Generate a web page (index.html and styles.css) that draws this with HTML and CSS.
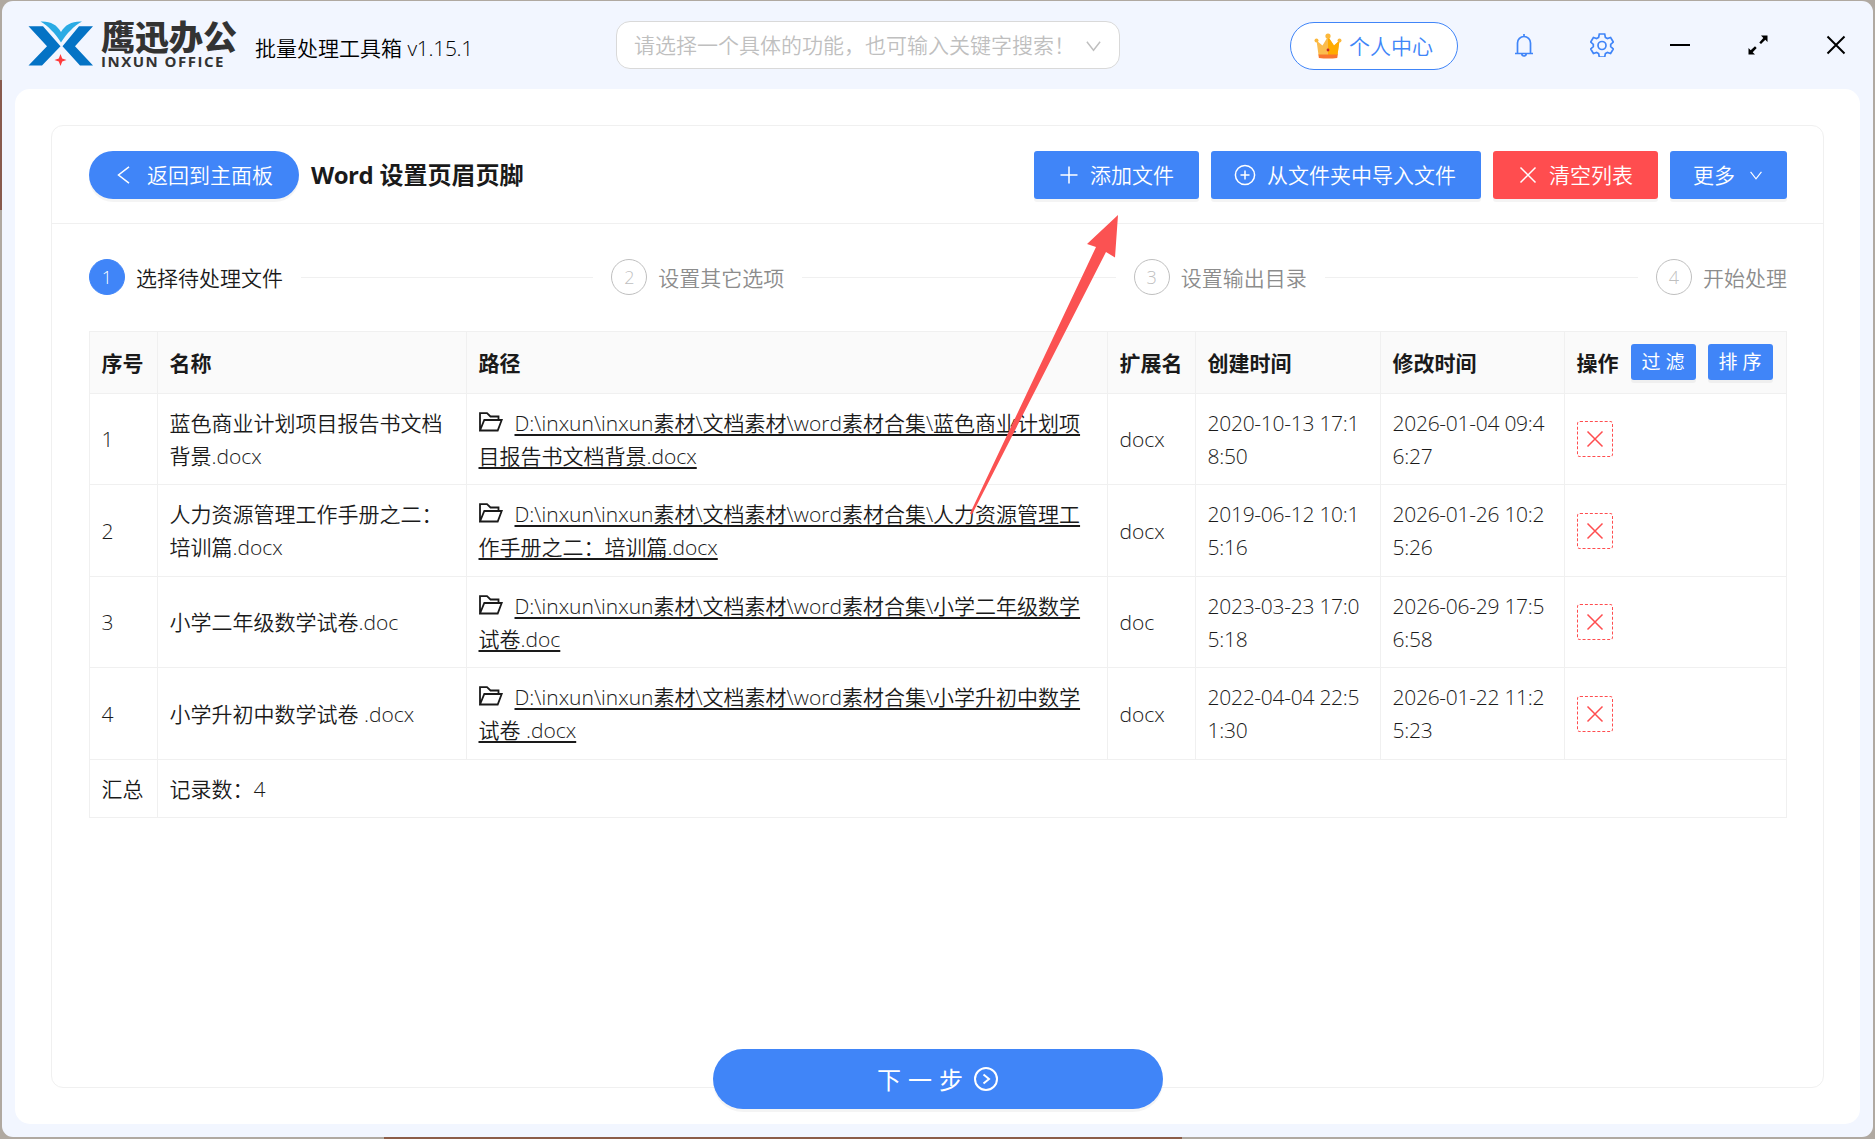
FILE: index.html
```
<!DOCTYPE html>
<html lang="zh-CN">
  <head>
    <meta charset="UTF-8" />
    <meta name="viewport" content="width=device-width, initial-scale=1.0" />
    <title>批量处理工具箱</title>
    <link rel="stylesheet" href="styles.css">
  </head>
  <body>
    <!-- shared icons -->
    <svg class="sprite" width="0" height="0">
      <symbol id="close" viewBox="0 0 18 18"><path d="M1.5 1.5l15 15M16.5 1.5l-15 15" /></symbol>
      <symbol id="down" viewBox="0 0 18 18"><path d="M2 5l7 9 7-9" /></symbol>
      <symbol id="folder" viewBox="0 0 24 20"><path d="M1 18.5V1.2h7l3.5 3.3h8v3.3M1 18.5L5.3 8h17.4l-4 10.500z" /></symbol>
    </svg>

    <div class="window">
      <header>
        <svg class="logo" viewBox="0 0 66 46" width="66" height="46">
          <path fill="#0473c5" d="M0.500 5.300h14.500l17.500 20L14 44.600H0.500L19 25.300zM65 5.300H51L34.500 25.300 52 44.600h13L47 25.300z" />
          <path fill="#2aabe4" d="M12.500.5c10-.5 16 3 20.500 10.500C37.500 3.500 44 0 54 .5 46 5 39 12 33 21.500 27 12 20 5 12.500.5z" />
          <path fill="#ff3b3b" d="M32.500 33l1.700 4.500 4.300 1.500-4.300 1.500-1.700 4.500-1.700-4.500-4.300-1.500 4.300-1.500z" />
        </svg>
        <div class="brand">
          <div class="brand-cn">鹰迅办公</div>
          <div class="brand-en">INXUN OFFICE</div>
        </div>
        <div class="app-name">批量处理工具箱 <span>v1.15.1</span></div>
        <div class="search">
          <span>请选择一个具体的功能，也可输入关键字搜索！</span>
          <svg class="line" width="17" height="17"><use href="#down" /></svg>
        </div>
        <div class="user">
          <svg viewBox="0 0 28 26" width="28" height="26">
            <path fill="#fbbc4d" d="M2.500 7.500l6 5L14 3.500l6 9 5.500-5L23.500 22h-19z" />
            <path fill="#ffab00" d="M14 3.500l6 9 5.500-5L23.500 22H14z" />
            <path fill="#f9762f" d="M4.300 21.500h19.500l-.6 3.500q-9 1-18.300 0z" />
            <g fill="#fbb83c"><circle cx="2.500" cy="7.500" r="2" /><circle cx="25.500" cy="7.500" r="2" /><circle cx="14" cy="3" r="2.600" /></g>
            <circle fill="#c62828" cx="14" cy="17" r="1.400" />
          </svg>
          个人中心
        </div>
        <div class="tools">
          <svg class="line blue" viewBox="0 0 24 24" width="24" height="24">
            <path d="M3 20.500h18M5.500 20.500V10a6.500 6.500 0 0 1 13 0v10.500M12 3.500V1M9.800 20.800a2.200 2.200 0 0 0 4.400 0" />
          </svg>
          <svg class="line blue" viewBox="0 0 24 24" width="24" height="24">
            <path d="M9.300 1h5.400l.7 3.400 2 1.200 3.200-1.100 2.700 4.600-2.600 2.200v2.400l2.600 2.200-2.700 4.600-3.200-1.100-2 1.200-.7 3.400H9.300l-.7-3.400-2-1.200-3.200 1.100L.7 15.900l2.600-2.200v-2.400L.7 9.100l2.700-4.600 3.200 1.100 2-1.200z" />
            <circle cx="12" cy="12.500" r="4" />
          </svg>
          <svg class="line dark" viewBox="0 0 24 24" width="24" height="24"><path d="M2 12h20" /></svg>
          <svg viewBox="0 0 24 24" width="24" height="24">
            <path d="M15 2.500h6.500V9l-2.200-2.200-4.300 4.300-1.700-1.700 4-4.300zM9 21.500H2.500V15l2.200 2.200 4.300-4 1.700 1.700-4 4.300z" />
          </svg>
          <svg class="line dark" viewBox="0 0 24 24" width="24" height="24"><path d="M3.500 3.500l17 17M20.500 3.500l-17 17" /></svg>
        </div>
      </header>

      <main>
        <section class="card">
          <div class="card-head">
            <div class="btn back">
              <svg class="line" viewBox="0 0 18 18" width="18" height="18"><path d="M15 .8L4.500 9 15 17.200" /></svg>
              返回到主面板
            </div>
            <h1><span>Word</span> 设置页眉页脚</h1>
            <div class="actions">
              <div class="btn"><svg class="line" viewBox="0 0 18 18" width="18" height="18"><path d="M9 .5v17M.5 9h17" /></svg>添加文件</div>
              <div class="btn import">
                <svg class="line" viewBox="0 0 22 22" width="22" height="22"><circle cx="11" cy="11" r="9.600" /><path d="M11 6.500v9M6.500 11h9" /></svg>从文件夹中导入文件
              </div>
              <div class="btn red"><svg class="line" width="18" height="18"><use href="#close" /></svg>清空列表</div>
              <div class="btn more">更多<svg class="line" width="14" height="14"><use href="#down" /></svg></div>
            </div>
          </div>

          <div class="steps">
            <div class="step active"><i>1</i><span>选择待处理文件</span></div>
            <div class="step"><i>2</i><span>设置其它选项</span></div>
            <div class="step"><i>3</i><span>设置输出目录</span></div>
            <div class="step"><i>4</i><span>开始处理</span></div>
          </div>

          <table>
            <colgroup>
              <col class="c-no"><col class="c-name"><col class="c-path"><col class="c-ext"><col class="c-date"><col class="c-date2"><col>
            </colgroup>
            <thead>
              <tr>
                <th>序号</th>
                <th>名称</th>
                <th>路径</th>
                <th>扩展名</th>
                <th>创建时间</th>
                <th>修改时间</th>
                <th><div class="ops">操作<b class="btn small">过滤</b><b class="btn small">排序</b></div></th>
              </tr>
            </thead>
            <tbody>
              <tr>
                <td>1</td>
                <td>蓝色商业计划项目报告书文档<br>背景.docx</td>
                <td><svg class="line folder" width="24" height="20"><use href="#folder" /></svg><u>D:\inxun\inxun素材\文档素材\word素材合集\蓝色商业计划项<br>目报告书文档背景.docx</u></td>
                <td>docx</td>
                <td class="date">2020-10-13 17:1<br>8:50</td>
                <td class="date">2026-01-04 09:4<br>6:27</td>
                <td class="op"><div class="del"><svg class="line" width="18" height="18"><use href="#close" /></svg></div></td>
              </tr>
              <tr>
                <td>2</td>
                <td>人力资源管理工作手册之二：<br>培训篇.docx</td>
                <td><svg class="line folder" width="24" height="20"><use href="#folder" /></svg><u>D:\inxun\inxun素材\文档素材\word素材合集\人力资源管理工<br>作手册之二：培训篇.docx</u></td>
                <td>docx</td>
                <td class="date">2019-06-12 10:1<br>5:16</td>
                <td class="date">2026-01-26 10:2<br>5:26</td>
                <td class="op"><div class="del"><svg class="line" width="18" height="18"><use href="#close" /></svg></div></td>
              </tr>
              <tr>
                <td>3</td>
                <td>小学二年级数学试卷.doc</td>
                <td><svg class="line folder" width="24" height="20"><use href="#folder" /></svg><u>D:\inxun\inxun素材\文档素材\word素材合集\小学二年级数学<br>试卷.doc</u></td>
                <td>doc</td>
                <td class="date">2023-03-23 17:0<br>5:18</td>
                <td class="date">2026-06-29 17:5<br>6:58</td>
                <td class="op"><div class="del"><svg class="line" width="18" height="18"><use href="#close" /></svg></div></td>
              </tr>
              <tr>
                <td>4</td>
                <td>小学升初中数学试卷 .docx</td>
                <td><svg class="line folder" width="24" height="20"><use href="#folder" /></svg><u>D:\inxun\inxun素材\文档素材\word素材合集\小学升初中数学<br>试卷 .docx</u></td>
                <td>docx</td>
                <td class="date">2022-04-04 22:5<br>1:30</td>
                <td class="date">2026-01-22 11:2<br>5:23</td>
                <td class="op"><div class="del"><svg class="line" width="18" height="18"><use href="#close" /></svg></div></td>
              </tr>
            </tbody>
            <tfoot>
              <tr>
                <td>汇总</td>
                <td colspan="6">记录数：4</td>
              </tr>
            </tfoot>
          </table>
        </section>

        <div class="btn next">
          <span>下一步</span>
          <svg class="line" viewBox="0 0 24 24" width="24" height="24"><circle cx="12" cy="12" r="11" /><path d="M9.500 7.500l5.500 4.500-5.500 4.500" /></svg>
        </div>
      </main>
    </div>

    <!-- pointer to the add button -->
    <svg class="pointer" viewBox="0 0 150 302" width="150" height="302">
      <path d="M149 1L146 43.500 137 38 3 300.500 1 299.500 127 33 118 30z" />
    </svg>
  </body>
</html>
```

FILE: styles.css
```
* {
  margin: 0;
  padding: 0;
  box-sizing: border-box;
}

body {
  height: 1139px;
  padding: 1px 2px 2px;
  overflow: hidden;
  background:
    linear-gradient(#8c5d48, #8c5d48) 384px 1137px / 798px 2px no-repeat,
    linear-gradient(#885a4e, #885a4e) 0 80px / 2px 130px no-repeat,
    #b0a9a1;
  font-family: "Open Sans", "Noto Sans CJK SC", sans-serif;
  font-weight: 330;
  font-size: 21px;
  line-height: 33px;
  color: #1a1a1a;
}

.sprite {
  position: absolute;
}

.line {
  fill: none;
  stroke: currentColor;
  stroke-width: 1.5;
}

.window {
  height: 1136px;
  padding: 0 13px 13px;
  border-radius: 11px;
  background: #f2f6ff;
}

/* title bar */
header {
  display: flex;
  align-items: center;
  height: 88px;
  padding: 0 13px;
  color: #000;
  white-space: nowrap;
}

header > * {
  flex-shrink: 0;
}

.logo {
  margin-top: -3px;
}

.brand {
  width: 138px;
  margin: -1px 0 0 7px;
  color: #333;
  font-weight: 900;
}

.brand-cn {
  font-size: 34px;
  line-height: 34px;
}

.brand-en {
  font-family: "Open Sans", sans-serif;
  font-weight: 700;
  font-size: 15px;
  line-height: 15px;
  letter-spacing: 1.5px;
}

.app-name {
  width: 377px;
  padding: 6px 0 0 16px;
}

.app-name span {
  letter-spacing: -0.3px;
}

.search {
  display: flex;
  align-items: center;
  justify-content: space-between;
  width: 504px;
  height: 48px;
  padding: 0 17px;
  border: 1px solid #d9d9d9;
  border-radius: 14px;
  background: #fff;
  color: #bfbfbf;
}

.user {
  display: flex;
  align-items: center;
  gap: 7px;
  width: 168px;
  height: 48px;
  margin: 2px 0 0 170px;
  padding-left: 23px;
  border: 1px solid #4085f8;
  border-radius: 24px;
  background: #fff;
  color: #4085f8;
}

.tools {
  display: flex;
  gap: 54px;
  margin-left: 54px;
}

.blue {
  color: #4085f8;
  stroke-width: 1.7;
}

.dark {
  stroke-width: 2;
}

/* content */
main {
  height: 1035px;
  padding: 36px;
  border-radius: 15px;
  background: #fff;
}

.card {
  height: 963px;
  border: 1px solid #f0f0f0;
  border-radius: 12px;
}

.card-head {
  display: flex;
  align-items: center;
  height: 98px;
  padding: 0 36px 0 37px;
  border-bottom: 1px solid #f0f0f0;
}

h1 {
  margin-left: 12px;
  font-size: 24px;
  font-weight: 700;
}

h1 span {
  letter-spacing: -0.5px;
}

.btn {
  display: flex;
  align-items: center;
  height: 48px;
  border-radius: 3px;
  background: #4085f8;
  color: #fff;
  box-shadow: 0 3px 0 rgba(0, 0, 0, 0.045);
  white-space: nowrap;
}

.card-head .btn {
  padding-top: 2px;
}

.card-head .btn svg {
  margin-top: -2px;
}

.back {
  width: 210px;
  gap: 15px;
  padding-left: 25px;
  border-radius: 24px;
}

.actions {
  display: flex;
  gap: 12px;
  margin-left: auto;
}

.actions .btn {
  gap: 12px;
  width: 165px;
  padding-left: 26px;
}

.actions .import {
  width: 270px;
  padding-left: 23px;
  gap: 11px;
}

.actions .red {
  background: #ff4d4f;
}

.actions .more {
  width: 117px;
  padding-left: 23px;
  gap: 14px;
}

/* steps */
.steps {
  display: flex;
  gap: 18px;
  height: 36px;
  margin: 35px 36px 36px 37px;
}

.step {
  display: flex;
  flex: 1;
  align-items: center;
  color: #8c8c8c;
  white-space: nowrap;
}

.step span {
  padding-top: 2px;
}

.step::after {
  content: "";
  flex: 1;
  height: 1px;
  margin-left: 18px;
  background: #f0f0f0;
}

.step:last-child {
  flex: none;
}

.step:last-child::after {
  display: none;
}

.step i {
  width: 36px;
  height: 36px;
  margin-right: 11px;
  border: 1px solid #bfbfbf;
  border-radius: 50%;
  color: #bfbfbf;
  font-size: 18px;
  font-style: normal;
  line-height: 34px;
  text-align: center;
}

.step.active {
  color: #1a1a1a;
}

.active i {
  border-color: #4085f8;
  background: #4085f8;
  color: #fff;
}

/* file list */
table {
  width: 1698px;
  margin-left: 37px;
  table-layout: fixed;
  border-collapse: collapse;
}

.c-no { width: 68px; }
.c-name { width: 309px; }
.c-path { width: 641px; }
.c-ext { width: 88px; }
.c-date { width: 185px; }
.c-date2 { width: 184px; }

th,
td {
  padding: 1px 0 0 11.5px;
  border: 1px solid #f0f0f0;
  text-align: left;
  white-space: nowrap;
}

th {
  height: 62px;
  background: #fafafa;
  font-weight: 700;
}

tbody tr {
  height: 91px;
}

tbody tr:nth-child(even) {
  height: 92px;
}

tfoot tr {
  height: 58px;
}

.date {
  letter-spacing: -0.27px;
}

.op {
  padding-top: 0;
}

.ops {
  display: flex;
  align-items: center;
  gap: 12px;
}

.small {
  width: 65px;
  height: 36px;
  margin-top: -2px;
  padding-left: 11px;
  font-size: 19px;
  font-weight: 400;
  letter-spacing: 5px;
}

.folder {
  margin: 0 12px 0 0;
  vertical-align: -1px;
  stroke-width: 1.8;
}

u {
  text-decoration-thickness: 2px;
  text-underline-offset: 3px;
}

.del {
  display: flex;
  align-items: center;
  justify-content: center;
  width: 36px;
  height: 36px;
  border: 1px dashed #ff4d4f;
  border-radius: 3px;
  color: #ff4d4f;
}

.next {
  justify-content: center;
  gap: 4px;
  position: relative;
  width: 450px;
  height: 60px;
  margin: -39px auto 0;
  border-radius: 30px;
  font-size: 24px;
  font-weight: 400;
}

.next span {
  letter-spacing: 7px;
}

.next svg {
  stroke-width: 2;
}

/* lies over the page */
.pointer {
  position: absolute;
  left: 969px;
  top: 214px;
  fill: #fb5252;
}
```
